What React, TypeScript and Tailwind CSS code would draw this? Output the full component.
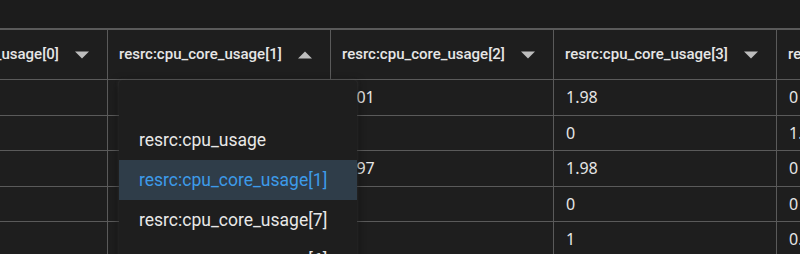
import React from "react";

const columns = [
  { name: "resrc:cpu_core_usage[0]", sort: "down", cells: ["", "", "", "", ""] },
  { name: "resrc:cpu_core_usage[1]", sort: "up", cells: ["", "", "", "", ""] },
  { name: "resrc:cpu_core_usage[2]", sort: "down", cells: ["1.01", "", "0.97", "", ""] },
  { name: "resrc:cpu_core_usage[3]", sort: "down", cells: ["1.98", "0", "1.98", "0", "1"] },
  { name: "resrc:cpu_core_usage[4]", sort: "down", cells: ["0", "1.98", "0", "0", "0.99"] },
];

const options = ["", "resrc:cpu_usage", "resrc:cpu_core_usage[1]", "resrc:cpu_core_usage[7]", "resrc:cpu_core_usage[6]"];

function SortArrow({ dir }: { dir: string }) {
  return (
    <svg width="14" height="8" viewBox="0 0 14 8" className="shrink-0">
      {dir === "up" ? (
        <polygon points="0,7.5 14,7.5 7,0.5" fill="#bdbdbd" />
      ) : (
        <polygon points="0,0.5 14,0.5 7,7.5" fill="#bdbdbd" />
      )}
    </svg>
  );
}

export default function App() {
  return (
    <div className="relative w-[800px] h-[254px] overflow-hidden bg-[#1c1c1c]">
      <div className="h-[28px]" />
      <div className="border-t-2 border-[#5a5a5a] bg-[#1e1e1e] h-full">
        <div className="flex ml-[-115px]">
          {columns.map((col) => (
            <div key={col.name} className="w-[223px] shrink-0 border-r border-[#5a5a5a]">
              <div
                className="h-[50px] flex items-center justify-between pl-[11px] pr-[18px] border-b border-[#5a5a5a] text-[15px] font-medium text-[#e6e6e6]"
                style={{ fontFamily: "Roboto, sans-serif" }}
              >
                <span>{col.name}</span>
                <SortArrow dir={col.sort} />
              </div>
              {col.cells.map((c, i) => (
                <div
                  key={i}
                  className="h-[35.5px] flex items-center pl-[12px] border-b border-[#5a5a5a] text-[16px] text-[#e6e6e6]"
                  style={{ fontFamily: "'Noto Sans', sans-serif" }}
                >
                  {c}
                </div>
              ))}
            </div>
          ))}
        </div>
      </div>

      <div
        className="absolute left-[119px] top-[80px] w-[238px] rounded-t-[4px] bg-[#1e1e1e] shadow-[0_2px_8px_rgba(0,0,0,0.6),-1px_0_3px_rgba(120,120,120,0.25),1px_0_3px_rgba(120,120,120,0.25)]"
        style={{ fontFamily: "Roboto, sans-serif" }}
      >
        {options.map((o, i) => (
          <div
            key={i}
            className={`h-[40px] flex items-center pl-[20px] text-[17.5px] ${
              i === 2 ? "bg-[#2f3d49] text-[#3d9be9]" : "text-[#e8e8e8]"
            }`}
          >
            {o}
          </div>
        ))}
      </div>
    </div>
  );
}
